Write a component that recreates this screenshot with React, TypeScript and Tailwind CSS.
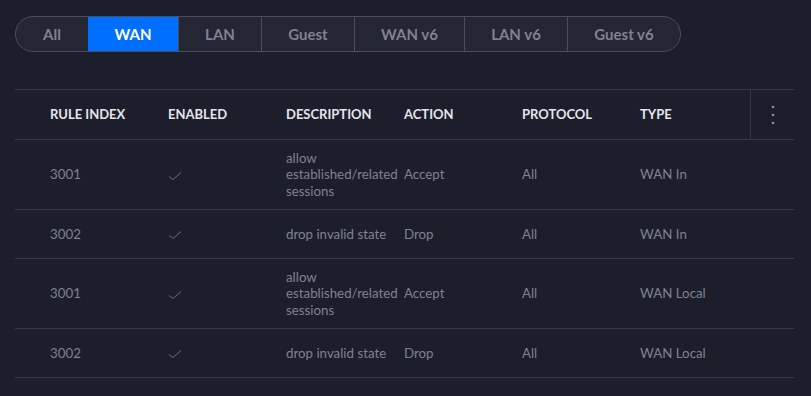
const tabs = [
  { label: "All", w: "w-[72px]" },
  { label: "WAN", w: "w-[90px]" },
  { label: "LAN", w: "w-[83px]" },
  { label: "Guest", w: "w-[93px]" },
  { label: "WAN v6", w: "w-[110px]" },
  { label: "LAN v6", w: "w-[103px]" },
  { label: "Guest v6", w: "w-[113px]" },
];

const rules = [
  { index: "3001", desc: "allow established/related sessions", action: "Accept", protocol: "All", type: "WAN In" },
  { index: "3002", desc: "drop invalid state", action: "Drop", protocol: "All", type: "WAN In" },
  { index: "3001", desc: "allow established/related sessions", action: "Accept", protocol: "All", type: "WAN Local" },
  { index: "3002", desc: "drop invalid state", action: "Drop", protocol: "All", type: "WAN Local" },
];

const headers = ["Rule Index", "Enabled", "Description", "Action", "Protocol", "Type"];

const Check = () => (
  <svg width="14" height="10" viewBox="0 0 14 10" fill="none">
    <path d="M1 5.5l4 3L13 1.5" stroke="#6b6e7b" strokeWidth="1" />
  </svg>
);

const Kebab = () => (
  <svg width="4" height="20" viewBox="0 0 4 20" fill="#8a8c98">
    <circle cx="2" cy="2" r="1.3" />
    <circle cx="2" cy="10" r="1.3" />
    <circle cx="2" cy="18" r="1.3" />
  </svg>
);

export default function App() {
  return (
    <div className="min-h-[396px] w-full bg-[#1c1e2b] pt-4 font-['Lato',sans-serif]">
      <div className="ml-[15px] flex h-[36px] w-fit overflow-hidden rounded-full border border-[#4b4d5b] bg-[#242633]">
        {tabs.map((t, i) => (
          <button
            key={t.label}
            className={
              t.w +
              " text-[15px] font-bold " +
              (i === 1 ? "bg-[#006fff] text-white" : "text-[#7f828f]") +
              (i > 1 ? " border-l border-[#4b4d5b]" : "")
            }
          >
            {t.label}
          </button>
        ))}
      </div>

      <div className="ml-[15px] mt-[37px] w-[779px]">
        <div className="flex h-[51px] items-center border-y border-[#363846]">
          <div className="grid min-w-0 flex-1 grid-cols-[118px_118px_118px_118px_118px_1fr] pl-[35px]">
            {headers.map((h) => (
              <div key={h} className="text-[13px] font-bold uppercase text-[#e4e5ea]">
                {h}
              </div>
            ))}
          </div>
          <div className="flex h-full w-[44px] shrink-0 items-center justify-center border-l border-[#363846]">
            <Kebab />
          </div>
        </div>

        {rules.map((r, i) => (
          <div
            key={i}
            className={
              "grid grid-cols-[118px_118px_118px_118px_118px_1fr] items-center border-b border-[#363846] pl-[35px] text-[13.3px] leading-[16.5px] text-[#7f828f] " +
              (r.desc.length > 20 ? "h-[70px]" : "h-[49px]")
            }
          >
            <div>{r.index}</div>
            <div className="pt-[2px]">
              <Check />
            </div>
            <div className="pr-[2px]">{r.desc}</div>
            <div>{r.action}</div>
            <div>{r.protocol}</div>
            <div>{r.type}</div>
          </div>
        ))}
      </div>
    </div>
  );
}
